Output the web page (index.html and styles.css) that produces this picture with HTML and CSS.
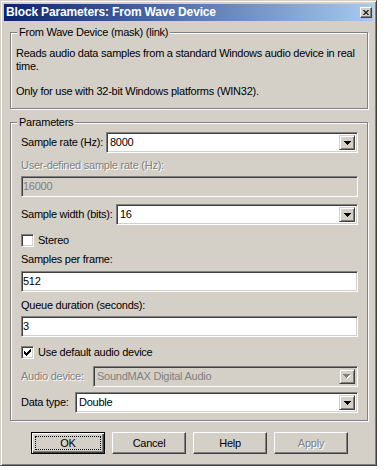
FILE: index.html
```html
<!DOCTYPE html>
<html lang="en">
<head>
<meta charset="utf-8">
<title>Block Parameters: From Wave Device</title>
<link rel="stylesheet" href="styles.css">
</head>
<body>
<div class="window">
  <div class="titlebar">
    <span class="title">Block Parameters: From Wave Device</span>
    <span class="close-btn"><svg width="8" height="7" viewBox="0 0 8 7"><path d="M0 0h2v1h-2zM6 0h2v1h-2zM1 1h2v1h-2zM5 1h2v1h-2zM2 2h4v1h-4zM3 3h2v1h-2zM2 4h4v1h-4zM1 5h2v1h-2zM5 5h2v1h-2zM0 6h2v1h-2zM6 6h2v1h-2z" fill="#000"/></svg></span>
  </div>
  <div class="client">
    <fieldset class="group group-desc">
      <legend class="legend">From Wave Device (mask) (link)</legend>
      <p class="desc">Reads audio data samples from a standard Windows audio device in real<br>time.</p>
      <p class="desc desc-gap">Only for use with 32-bit Windows platforms (WIN32).</p>
    </fieldset>

    <fieldset class="group group-params">
      <legend class="legend legend-params">Parameters</legend>

      <div class="row">
        <span class="lbl lbl-rate">Sample rate (Hz):</span>
        <div class="combo"><span class="value">8000</span><span class="drop"><svg width="7" height="4" viewBox="0 0 7 4"><path d="M0 0h7v1h-1v1h-1v1h-1v1h-1v-1h-1v-1h-1v-1h-1z" fill="#000"/></svg></span></div>
      </div>

      <div class="lbl disabled-text mt-6">User-defined sample rate (Hz):</div>
      <div class="edit edit-disabled mt-4"><span class="value">16000</span></div>

      <div class="row mt-7">
        <span class="lbl lbl-width">Sample width (bits):</span>
        <div class="combo"><span class="value">16</span><span class="drop"><svg width="7" height="4" viewBox="0 0 7 4"><path d="M0 0h7v1h-1v1h-1v1h-1v1h-1v-1h-1v-1h-1v-1h-1z" fill="#000"/></svg></span></div>
      </div>

      <div class="check-row mt-9">
        <span class="checkbox"></span>
        <span class="check-label">Stereo</span>
      </div>

      <div class="lbl mt-6">Samples per frame:</div>
      <div class="edit mt-5"><span class="value">512</span></div>

      <div class="lbl mt-7">Queue duration (seconds):</div>
      <div class="edit mt-4"><span class="value">3</span></div>

      <div class="check-row mt-9">
        <span class="checkbox"><svg width="7" height="7" viewBox="0 0 7 7"><path d="M6 0h1v1h-1zM5 1h2v1h-2zM0 2h1v1h-1zM4 2h3v1h-3zM0 3h2v1h-2zM3 3h3v1h-3zM0 4h5v1h-5zM1 5h3v1h-3zM2 6h1v1h-1z" fill="#000"/></svg></span>
        <span class="check-label">Use default audio device</span>
      </div>

      <div class="row mt-7">
        <span class="lbl lbl-device disabled-text">Audio device:</span>
        <div class="combo combo-disabled"><span class="value">SoundMAX Digital Audio</span><span class="drop"><svg width="8" height="5" viewBox="0 0 8 5"><path d="M1 1h7v1h-1v1h-1v1h-1v1h-1v-1h-1v-1h-1v-1h-1z" fill="#fff"/><path d="M0 0h7v1h-1v1h-1v1h-1v1h-1v-1h-1v-1h-1v-1h-1z" fill="#808080"/></svg></span></div>
      </div>

      <div class="row mt-5">
        <span class="lbl lbl-type">Data type:</span>
        <div class="combo"><span class="value">Double</span><span class="drop"><svg width="7" height="4" viewBox="0 0 7 4"><path d="M0 0h7v1h-1v1h-1v1h-1v1h-1v-1h-1v-1h-1v-1h-1z" fill="#000"/></svg></span></div>
      </div>
    </fieldset>

    <div class="buttons">
      <span class="btn btn-default"><span class="focus">OK</span></span>
      <span class="btn"><span class="btn-text">Cancel</span></span>
      <span class="btn"><span class="btn-text">Help</span></span>
      <span class="btn"><span class="btn-text disabled-text">Apply</span></span>
    </div>
  </div>
</div>
</body>
</html>
```

FILE: styles.css
```css
* {
  box-sizing: border-box;
}

html,
body {
  margin: 0;
  padding: 0;
}

body {
  background: #fff;
  font-family: "Liberation Sans", Arial, sans-serif;
  font-size: 11px;
  line-height: 13px;
  letter-spacing: -0.25px;
  color: #000;
}

.window {
  width: 377px;
  height: 466px;
  padding: 3px;
  background: #d4d0c8;
  border: 1px solid;
  border-color: #d4d0c8 #404040 #404040 #d4d0c8;
  box-shadow: inset 1px 1px 0 #fff, inset -1px -1px 0 #808080;
  display: flex;
  flex-direction: column;
}

.titlebar {
  flex: none;
  height: 17px;
  display: flex;
  align-items: center;
  padding: 0 1px 0 2px;
  background: linear-gradient(to right, #0a246a, #a6caf0);
}

.title {
  color: #fff;
  font-weight: bold;
  font-size: 12px;
  letter-spacing: -0.15px;
  white-space: nowrap;
}

.close-btn {
  margin-left: auto;
  width: 12px;
  height: 11px;
  display: flex;
  align-items: center;
  justify-content: center;
  background: #d4d0c8;
  border: 1px solid;
  border-color: #fff #404040 #404040 #fff;
  box-shadow: inset -1px -1px 0 #808080;
}

.close-btn svg {
  width: 6px;
  height: 5px;
}

.client {
  flex: 1;
  display: flex;
  flex-direction: column;
  padding: 5px 5px 0 6px;
}

.group {
  margin: 0;
  min-width: 0;
  border: 1px solid #808080;
  box-shadow: inset 1px 1px 0 #fff, 1px 1px 0 #fff;
}

.legend {
  padding: 0 2px;
  margin-left: 1px;
  line-height: 13px;
  background: #d4d0c8;
}

.group-desc {
  padding: 8px 3px 10px 5px;
}

.desc {
  margin: 0;
  white-space: nowrap;
}

.desc-gap {
  margin-top: 12px;
}

.group-params {
  margin-top: 7px;
  padding: 3px 9px 7px 10px;
}

.legend-params {
  margin-left: -4px;
}

.row {
  display: flex;
  align-items: center;
}

.lbl {
  flex: none;
  white-space: nowrap;
  height: 13px;
}

.lbl-rate { width: 85px; }
.lbl-width { width: 95px; }
.lbl-device { width: 72px; }
.lbl-type { width: 54px; }

.disabled-text {
  color: #808080;
  text-shadow: 1px 1px 0 #fff;
}

.combo,
.edit {
  flex: 1;
  height: 21px;
  display: flex;
  align-items: center;
  background: #fff;
  border: 1px solid;
  border-color: #808080 #fff #fff #808080;
  box-shadow: inset 1px 1px 0 #404040, inset -1px -1px 0 #d4d0c8;
  padding: 2px;
}

.combo .value {
  flex: 1;
  padding-left: 1px;
  white-space: nowrap;
}

.edit {
  padding: 2px 1px;
}

.edit-disabled {
  background: #d4d0c8;
  color: #808080;
}

.combo-disabled {
  background: #d4d0c8;
  color: #808080;
}

.drop {
  flex: none;
  align-self: stretch;
  width: 16px;
  display: flex;
  align-items: center;
  justify-content: center;
  background: #d4d0c8;
  border: 1px solid;
  border-color: #d4d0c8 #404040 #404040 #d4d0c8;
  box-shadow: inset 1px 1px 0 #fff, inset -1px -1px 0 #808080;
}

.check-row {
  display: flex;
  align-items: center;
  gap: 4px;
  height: 13px;
}

.checkbox {
  flex: none;
  width: 13px;
  height: 13px;
  display: flex;
  padding: 2px 0 0 2px;
  background: #fff;
  border: 1px solid;
  border-color: #808080 #fff #fff #808080;
  box-shadow: inset 1px 1px 0 #404040, inset -1px -1px 0 #d4d0c8;
}

.checkbox svg {
  display: block;
}

.mt-3 { margin-top: 3px; }
.mt-4 { margin-top: 4px; }
.mt-5 { margin-top: 5px; }
.mt-6 { margin-top: 6px; }
.mt-7 { margin-top: 7px; }
.mt-8 { margin-top: 8px; }
.mt-9 { margin-top: 9px; }

.buttons {
  display: flex;
  gap: 7px;
  margin-top: 11px;
  padding-left: 21px;
}

.btn {
  width: 74px;
  height: 22px;
  display: flex;
  align-items: center;
  justify-content: center;
  background: #d4d0c8;
  border: 1px solid;
  border-color: #fff #404040 #404040 #fff;
  box-shadow: inset -1px -1px 0 #808080;
}

.btn-default {
  border-color: #000;
  box-shadow: inset 1px 1px 0 #fff, inset -1px -1px 0 #404040, inset -2px -2px 0 #808080;
  padding: 3px;
}

.focus {
  flex: 1;
  align-self: stretch;
  display: flex;
  align-items: center;
  justify-content: center;
  border: 1px dotted #000;
}
```
